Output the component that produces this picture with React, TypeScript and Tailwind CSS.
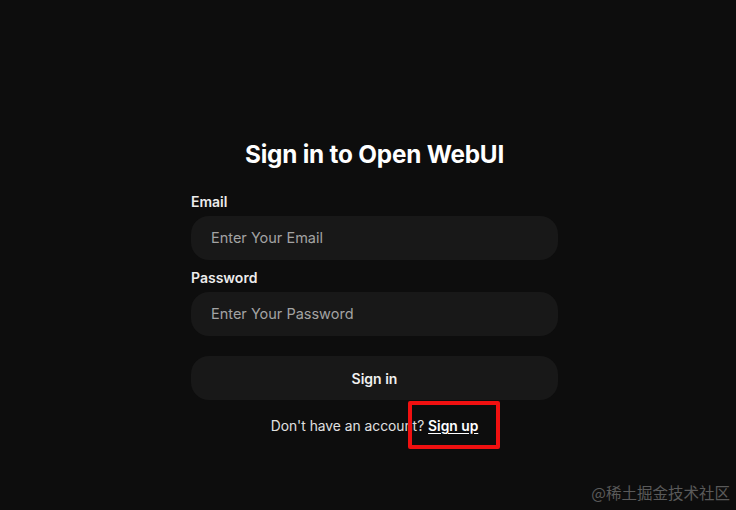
export default function App() {
  return (
    <div className="relative h-[510px] w-[736px] overflow-hidden bg-[#0d0d0d] font-['Inter',sans-serif]">
      <div className="flex justify-center pl-[13px] pt-[138px]">
        <div className="flex w-[367px] flex-col">
          <h1 className="text-center text-[24.3px] font-bold leading-[32px] tracking-[-0.2px] text-white">
            Sign in to Open WebUI
          </h1>
          <div className="mt-[22px] text-[14px] font-semibold leading-[20px] text-[#ececec]">Email</div>
          <div className="mt-[4px] flex h-[44px] items-center rounded-[18px] bg-[#181818] pl-[20px] text-[14.5px] text-[#a3a3a3]">
            Enter Your Email
          </div>
          <div className="mt-[8px] text-[14px] font-semibold leading-[20px] text-[#ececec]">Password</div>
          <div className="mt-[4px] flex h-[44px] items-center rounded-[18px] bg-[#181818] pl-[20px] text-[14.5px] text-[#a3a3a3]">
            Enter Your Password
          </div>
          <div className="mt-[20px] flex h-[44px] items-center justify-center rounded-[18px] bg-[#181818] text-[14px] font-semibold text-[#f0f0f0]">
            Sign in
          </div>
          <div className="mt-[16px] text-center text-[13.8px] leading-[20px] text-[#e0e0e0]">
            Don't have an account?{" "}
            <span className="font-semibold text-white underline underline-offset-2">Sign up</span>
          </div>
        </div>
      </div>
      <div className="absolute left-[408px] top-[401px] h-[48px] w-[92px] rounded-[2px] border-[4px] border-[#f01010]" />
      <div className="absolute bottom-[6px] right-[6px] font-['Noto_Sans_CJK_SC',sans-serif] text-[15.5px] text-[#5a5a5a]">
        @稀土掘金技术社区
      </div>
    </div>
  );
}
